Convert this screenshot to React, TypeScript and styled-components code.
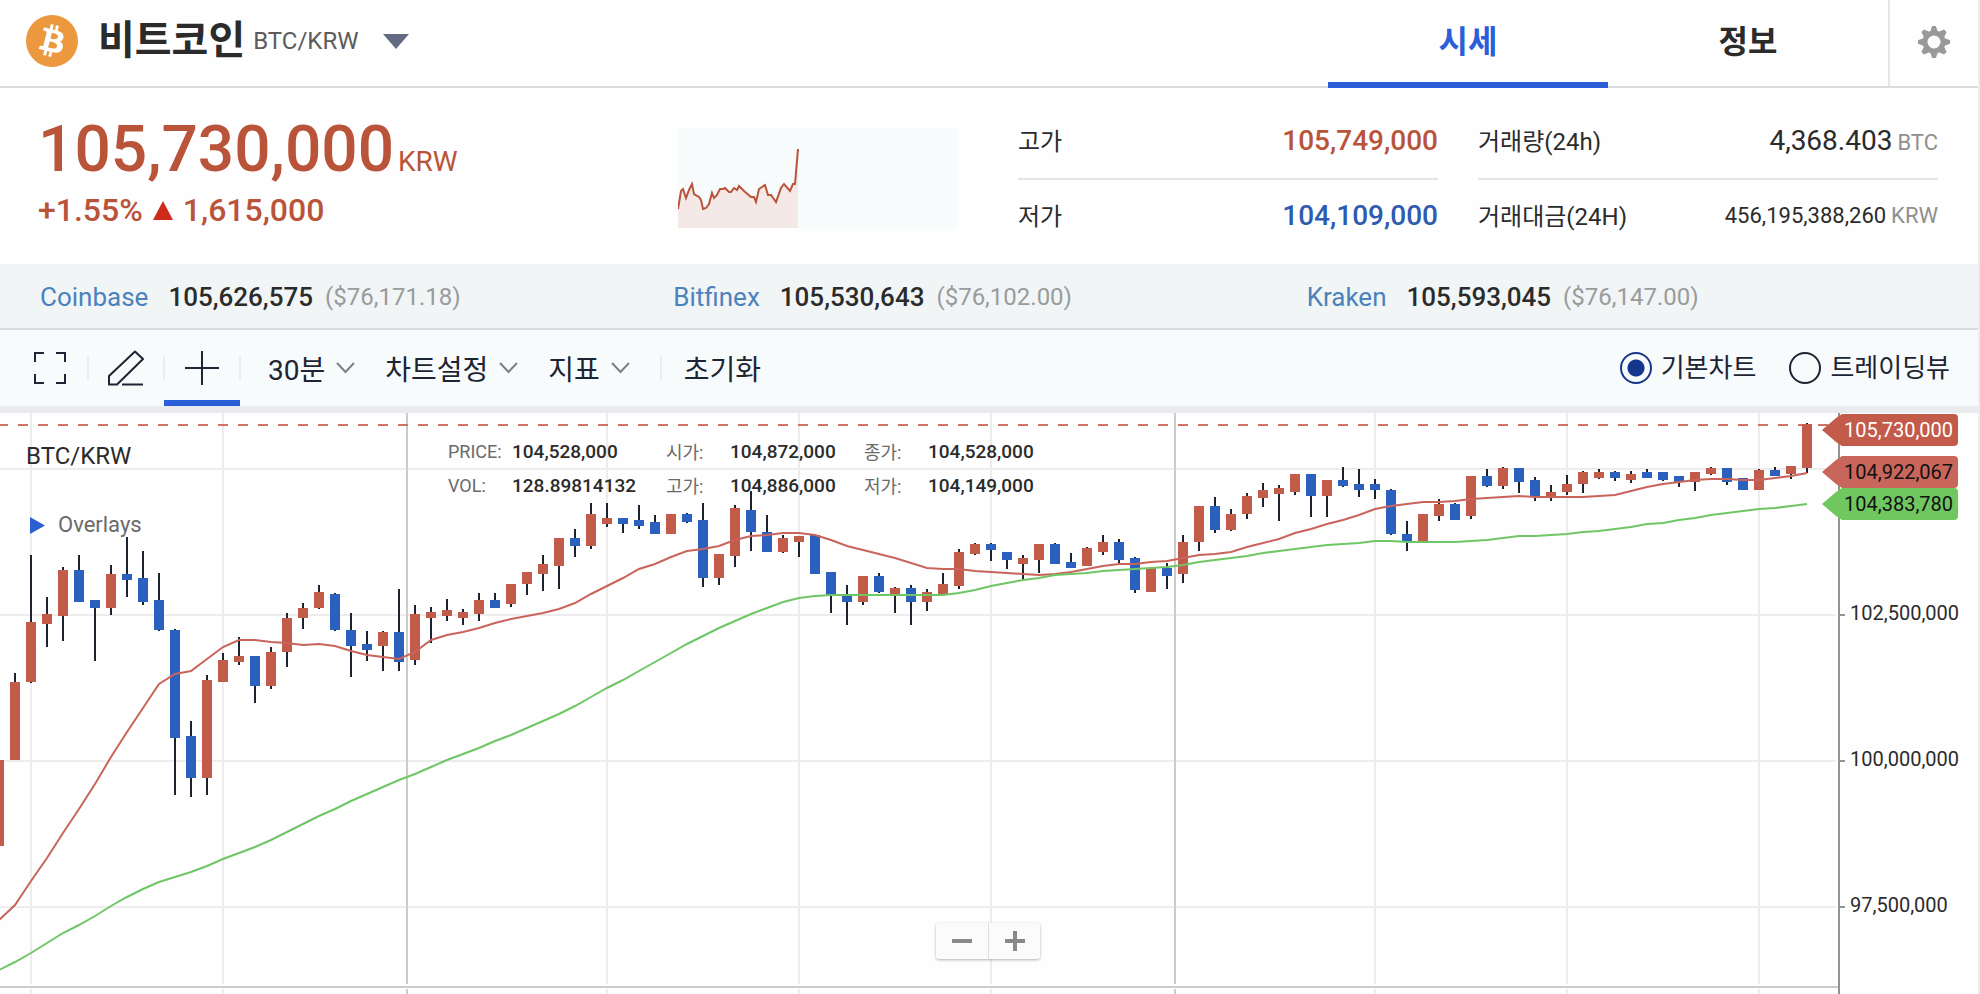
import React, { useState } from "react";
import styled, { createGlobalStyle } from "styled-components";
import { SiBitcoin } from "react-icons/si";

type Side = "up" | "down";
type Candle = [side: Side, bodyTop: number, bodyBottom: number, high: number, low: number];

const color = {
  text: "#2b2b2b",
  muted: "#8f8f8f",
  rise: "#b9543a",
  fall: "#2d5bb0",
  active: "#2a5fd8",
  candleUp: "#c35b4b",
  candleDown: "#2b60bf",
  wick: "#1b242e",
  maShort: "#c9645b",
  maLong: "#6fc665",
  grid: "#ececec",
  day: "#cbcbcb",
  rule: "#dadddd",
};

/* ---------- chart data ---------- */

const CHART_TOP = 413;
const FIRST_X = -1;
const STEP = 16;

const candles: Candle[] = [
  ["up", 760, 846, 760, 846],
  ["up", 682, 760, 673, 760],
  ["up", 622, 682, 555, 683],
  ["up", 614, 624, 597, 647],
  ["up", 570, 616, 567, 641],
  ["down", 570, 602, 555, 602],
  ["down", 600, 608, 600, 661],
  ["up", 574, 608, 565, 615],
  ["down", 574, 580, 537, 597],
  ["down", 578, 602, 551, 605],
  ["down", 600, 630, 573, 631],
  ["down", 630, 738, 629, 795],
  ["down", 736, 778, 721, 797],
  ["up", 680, 778, 675, 795],
  ["up", 660, 682, 653, 682],
  ["up", 656, 662, 637, 665],
  ["down", 656, 686, 656, 703],
  ["up", 652, 686, 647, 689],
  ["up", 618, 652, 613, 667],
  ["up", 608, 618, 603, 629],
  ["up", 592, 608, 585, 609],
  ["down", 594, 630, 593, 631],
  ["down", 630, 646, 613, 677],
  ["down", 644, 650, 631, 661],
  ["up", 632, 646, 631, 671],
  ["down", 632, 662, 589, 671],
  ["up", 614, 660, 605, 665],
  ["up", 612, 618, 607, 643],
  ["up", 610, 616, 599, 621],
  ["up", 612, 618, 609, 625],
  ["up", 600, 614, 593, 621],
  ["down", 600, 608, 593, 608],
  ["up", 584, 604, 584, 607],
  ["up", 572, 584, 572, 595],
  ["up", 564, 574, 555, 591],
  ["up", 538, 566, 538, 589],
  ["down", 538, 546, 529, 557],
  ["up", 514, 546, 503, 549],
  ["up", 518, 524, 503, 527],
  ["down", 518, 524, 518, 533],
  ["down", 520, 526, 505, 529],
  ["down", 522, 534, 515, 534],
  ["up", 514, 534, 514, 534],
  ["down", 514, 522, 513, 523],
  ["down", 520, 578, 503, 587],
  ["up", 554, 578, 554, 585],
  ["up", 508, 556, 505, 567],
  ["down", 510, 532, 491, 551],
  ["down", 532, 552, 515, 552],
  ["up", 538, 552, 535, 553],
  ["up", 536, 542, 536, 557],
  ["down", 535, 574, 535, 574],
  ["down", 572, 595, 572, 613],
  ["down", 595, 602, 585, 625],
  ["up", 576, 602, 576, 605],
  ["down", 576, 592, 573, 593],
  ["up", 588, 594, 587, 613],
  ["down", 588, 602, 585, 625],
  ["up", 592, 602, 589, 611],
  ["up", 584, 594, 573, 594],
  ["up", 552, 586, 549, 589],
  ["up", 544, 554, 543, 555],
  ["down", 544, 550, 543, 561],
  ["down", 552, 560, 552, 569],
  ["up", 558, 564, 555, 579],
  ["up", 544, 560, 544, 573],
  ["down", 544, 564, 543, 564],
  ["down", 562, 568, 553, 568],
  ["up", 548, 566, 547, 566],
  ["up", 542, 552, 535, 555],
  ["down", 542, 560, 539, 563],
  ["down", 558, 590, 557, 593],
  ["up", 568, 592, 568, 592],
  ["down", 568, 576, 563, 589],
  ["up", 542, 574, 535, 583],
  ["up", 506, 542, 506, 551],
  ["down", 506, 530, 497, 533],
  ["up", 514, 530, 509, 531],
  ["up", 496, 514, 493, 519],
  ["up", 490, 498, 483, 507],
  ["up", 488, 494, 485, 521],
  ["up", 474, 492, 474, 495],
  ["down", 474, 496, 474, 517],
  ["up", 480, 496, 480, 517],
  ["down", 480, 486, 467, 487],
  ["down", 484, 490, 469, 497],
  ["down", 484, 490, 479, 499],
  ["down", 490, 534, 489, 535],
  ["down", 534, 542, 521, 551],
  ["up", 514, 542, 514, 542],
  ["up", 504, 516, 499, 521],
  ["down", 504, 520, 503, 520],
  ["up", 476, 516, 476, 519],
  ["down", 476, 486, 469, 487],
  ["up", 468, 486, 467, 489],
  ["down", 468, 482, 468, 493],
  ["down", 480, 497, 477, 501],
  ["up", 492, 498, 485, 501],
  ["up", 484, 492, 475, 495],
  ["up", 472, 484, 471, 493],
  ["up", 472, 478, 469, 479],
  ["down", 472, 478, 471, 481],
  ["up", 474, 480, 471, 483],
  ["down", 472, 478, 469, 478],
  ["down", 472, 480, 472, 481],
  ["down", 476, 482, 476, 487],
  ["up", 472, 482, 472, 491],
  ["up", 468, 474, 467, 475],
  ["down", 468, 482, 468, 485],
  ["down", 478, 490, 478, 490],
  ["up", 470, 490, 469, 490],
  ["down", 470, 476, 467, 476],
  ["up", 466, 474, 466, 479],
  ["up", 424, 468, 423, 473],
];

const maShort = [
  920, 905, 881, 858, 833, 809, 784, 757, 732, 708, 684, 674, 671, 659, 647, 640, 640, 642, 643, 645, 644,
  646, 651, 655, 657, 659, 652, 640, 635, 632, 628, 623, 619, 616, 613, 609, 603, 594, 586, 578, 569, 564,
  557, 551, 549, 546, 540, 536, 535, 533, 533, 535, 540, 546, 550, 554, 558, 563, 568, 569, 569, 571, 572,
  573, 574, 575, 574, 572, 569, 566, 564, 564, 562, 561, 558, 555, 554, 552, 547, 543, 539, 533, 529, 524,
  520, 515, 509, 506, 504, 502, 502, 501, 499, 498, 497, 496, 497, 497, 497, 497, 496, 495, 491, 487, 484,
  482, 480, 479, 479, 480, 480, 478, 476, 473,
];

const maLong = [
  970, 962, 953, 943, 933, 925, 916, 906, 897, 889, 882, 877, 872, 866, 859, 853, 847, 840, 832, 824, 816,
  809, 801, 794, 787, 780, 774, 767, 760, 754, 748, 741, 735, 728, 721, 714, 706, 697, 688, 680, 671, 662,
  653, 644, 636, 628, 621, 614, 608, 602, 598, 596, 595, 595, 595, 595, 595, 595, 595, 595, 593, 590, 586,
  583, 580, 578, 575, 574, 573, 571, 570, 569, 568, 567, 565, 562, 560, 558, 556, 553, 551, 549, 547, 545,
  544, 543, 541, 541, 542, 542, 542, 542, 541, 540, 538, 536, 536, 535, 534, 532, 531, 529, 527, 524, 523,
  520, 518, 515, 513, 511, 509, 508, 506, 504,
];

const timeLines = [
  { x: 31 },
  { x: 223 },
  { x: 407, day: true },
  { x: 607 },
  { x: 799 },
  { x: 991 },
  { x: 1175, day: true },
  { x: 1375 },
  { x: 1567 },
  { x: 1759 },
];

const priceLines = [469, 615, 761, 907];
const axisPrices = ["102,500,000", "100,000,000", "97,500,000"];

const toPoints = (values: number[]) => values.map((y, i) => `${FIRST_X + i * STEP},${y}`).join(" ");

const sparkPoints =
  "0,81 3,63 5,61 8,70 11,62 14,56 16,66 21,69 23,72 25,81 28,80 31,76 34,65 36,70 39,67 42,61 45,61 47,60 51,64 53,64 56,60 59,62 61,58 66,63 73,69 76,69 78,74 81,61 84,59 87,57 90,67 93,67 98,74 103,60 106,56 112,63 115,56 117,56 120,21";

const exchanges = [
  { name: "Coinbase", krw: "105,626,575", usd: "($76,171.18)" },
  { name: "Bitfinex", krw: "105,530,643", usd: "($76,102.00)" },
  { name: "Kraken", krw: "105,593,045", usd: "($76,147.00)" },
];

const readout = [
  ["PRICE:", "104,528,000"],
  ["시가:", "104,872,000"],
  ["종가:", "104,528,000"],
  ["VOL:", "128.89814132"],
  ["고가:", "104,886,000"],
  ["저가:", "104,149,000"],
];

/* ---------- styles ---------- */

const GlobalStyle = createGlobalStyle`
  * { box-sizing: border-box; }
  body {
    margin: 0;
    background: #fefefe;
    color: ${color.text};
    font-family: Roboto, "Noto Sans CJK KR", sans-serif;
  }
  button, input { font-family: inherit; color: inherit; }
  button { border: 0; background: none; padding: 0; cursor: pointer; }
  dl, dd, ul { margin: 0; padding: 0; list-style: none; }
  svg { display: block; flex: none; }
`;

const Page = styled.main`
  display: flex;
  flex-direction: column;
  min-height: 100vh;
  border-right: 2px solid #eceeee;
`;

const Header = styled.header`
  display: flex;
  height: 88px;
  border-bottom: 2px solid ${color.rule};
`;

const MarketPicker = styled.button`
  display: flex;
  align-items: center;
  margin-right: auto;
  padding: 0 26px 4px;
`;

const CoinName = styled.h1`
  margin: 0 8px 0 20px;
  font-size: 40px;
  line-height: 56px;
  font-weight: 700;
`;

const PairCode = styled.span`
  margin-right: 24px;
  font-size: 24px;
  line-height: 28px;
  color: #5c5c5c;
`;

const Tabs = styled.nav`
  display: flex;
`;

const Tab = styled.a<{ $active?: boolean }>`
  display: flex;
  align-items: center;
  justify-content: center;
  width: 280px;
  height: 88px;
  padding-bottom: 4px;
  border-bottom: 6px solid ${(p) => (p.$active ? color.active : "transparent")};
  color: ${(p) => (p.$active ? color.active : color.text)};
  font-size: 32px;
  font-weight: 700;
  text-decoration: none;
`;

const SettingsButton = styled.button`
  display: flex;
  align-items: center;
  justify-content: center;
  width: 90px;
  padding-bottom: 2px;
  border-left: 2px solid #e4e5e5;
`;

const Summary = styled.section`
  display: flex;
  align-items: flex-start;
  height: 176px;
  padding: 16px 40px 0 38px;
  color: ${color.text};
`;

const PriceBlock = styled.div`
  flex: 1;
  padding-top: 6px;
  color: ${color.rise};
`;

const CurrentPrice = styled.div`
  display: flex;
  align-items: baseline;
  gap: 4px;
  font-size: 64px;
  line-height: 80px;
  font-weight: 500;
`;

const PriceUnit = styled.span`
  font-size: 28px;
  line-height: 32px;
  font-weight: 400;
`;

const Change = styled.div`
  display: flex;
  align-items: center;
  font-size: 32px;
  line-height: 40px;
  font-weight: 500;
  gap: 10px;
`;

const Sparkline = styled.svg`
  width: 280px;
  height: 100px;
  margin: 24px 60px 0 0;
  background: #f8fbfc;
`;

const Stats = styled.dl<{ $width: number }>`
  width: ${(p) => p.$width}px;

  & + & {
    margin-left: 40px;
  }
`;

const Stat = styled.div`
  display: flex;
  align-items: center;
  justify-content: space-between;
  height: 74px;
  font-size: 24px;

  & + & {
    border-top: 2px solid #e3e5e5;
  }

  dt {
    padding-bottom: 4px;
  }
`;

const StatValue = styled.dd<{ $tone?: string; $size?: number }>`
  padding-bottom: 1px;
  font-size: ${(p) => p.$size ?? 28}px;
  font-weight: ${(p) => (p.$tone ? 500 : 400)};
  color: ${(p) => p.$tone ?? color.text};
`;

const Unit = styled.span`
  margin-left: 5px;
  font-size: 22px;
  color: ${color.muted};
`;

const Exchanges = styled.ul`
  display: grid;
  grid-template-columns: repeat(3, 1fr);
  height: 66px;
  padding: 2px 38px 0 40px;
  background: #f1f5f6;
  border-bottom: 2px solid ${color.rule};
`;

const Exchange = styled.li`
  display: flex;
  align-items: center;
  font-size: 26px;
  white-space: nowrap;

  a {
    color: #4b82bd;
    text-decoration: none;
  }
  strong {
    margin: 0 12px 0 20px;
    font-weight: 500;
  }
  span {
    font-size: 24px;
    color: #999b9c;
  }
`;

const Toolbar = styled.div`
  display: flex;
  height: 83px;
  padding: 0 28px 0 12px;
  background: #f8fbfc;
  border-bottom: 7px solid #e9ebee;
  color: #1d2433;
`;

const ToolButton = styled.button<{ $active?: boolean }>`
  display: flex;
  align-items: center;
  justify-content: center;
  width: 76px;
  padding-top: 6px;
  border-bottom: 6px solid ${(p) => (p.$active ? color.active : "transparent")};
`;

const Divider = styled.span`
  align-self: center;
  width: 2px;
  height: 24px;
  margin: 0 -1px;
  background: #e9edef;
`;

const Menus = styled.div`
  display: flex;
  align-items: center;
  gap: 30px;
  padding: 0 31px 0 28px;
`;

const MenuButton = styled.button`
  display: flex;
  align-items: center;
  gap: 11px;
  padding-top: 6px;
  font-size: 28px;
  line-height: 40px;

  svg {
    margin-bottom: 6px;
  }
`;

const ResetButton = styled(MenuButton)`
  margin-left: 23px;
`;

const ChartModes = styled.fieldset`
  display: flex;
  align-items: center;
  gap: 33px;
  margin: 0 0 0 auto;
  padding: 0;
  border: 0;
`;

const Mode = styled.label`
  display: flex;
  align-items: center;
  gap: 9px;
  font-size: 26px;
  line-height: 32px;
  cursor: pointer;
`;

const Radio = styled.input`
  appearance: none;
  width: 32px;
  height: 32px;
  margin: 0;
  border: 2px solid #1d2433;
  border-radius: 50%;

  &:checked {
    border-color: #16358c;
    background: radial-gradient(circle, #16358c 8px, transparent 9px);
  }
`;

const Chart = styled.section`
  position: relative;
  display: flex;
  flex: 1;
  min-height: 581px;
`;

const PlotArea = styled.div`
  flex: 1;
  min-width: 0;
  overflow: hidden;
`;

const Plot = styled.svg`
  width: 100%;
  height: 581px;
`;

const Axis = styled.ol`
  width: 140px;
  margin: 0;
  padding: 129px 0 0;
  list-style: none;
  border-left: 2px solid #939393;
`;

const AxisPrice = styled.li`
  display: flex;
  align-items: center;
  gap: 5px;
  height: 146px;
  font-size: 20px;

  &::before {
    content: "";
    width: 5px;
    height: 2px;
    background: #939393;
  }

  span {
    padding-bottom: 4px;
  }
`;

const Tags = styled.ul`
  position: absolute;
  top: 1px;
  right: 20px;
  display: flex;
  flex-direction: column;
`;

const Tag = styled.li<{ $fill: string; $ink: string; $after?: number }>`
  width: 136px;
  height: 32px;
  padding: 0 6px 0 22px;
  margin-bottom: ${(p) => p.$after ?? 0}px;
  border-radius: 0 4px 4px 0;
  background: ${(p) => p.$fill};
  clip-path: polygon(0 50%, 14px 4px, 20px 0, 100% 0, 100% 100%, 20px 100%, 14px 28px);
  color: ${(p) => p.$ink};
  font-size: 20px;
  line-height: 32px;
`;

const Legend = styled.div`
  position: absolute;
  top: 27px;
  left: 26px;
`;

const LegendPair = styled.div`
  font-size: 24px;
  line-height: 32px;
`;

const OverlaysButton = styled.button`
  display: flex;
  align-items: center;
  gap: 13px;
  margin-top: 39px;
  padding-left: 4px;
  font-size: 22px;
  line-height: 28px;
  color: #6a6a6a;
`;

const Readout = styled.dl`
  position: absolute;
  top: 21px;
  left: 448px;
  display: grid;
  grid-template-columns: 218px 198px auto;
`;

const ReadoutItem = styled.div`
  display: grid;
  grid-template-columns: 64px auto;
  align-items: center;
  height: 34px;
  font-size: 18px;
  color: #6a6a6a;

  dd {
    font-size: 19px;
    font-weight: 500;
    color: ${color.text};
  }
`;

const Zoom = styled.div`
  position: absolute;
  top: 510px;
  left: calc(50% - 53px);
  display: flex;
  border-radius: 3px;
  background: #fbfbfb;
  box-shadow: 0 1px 3px rgba(0, 0, 0, 0.3);
`;

const ZoomButton = styled.button`
  display: flex;
  align-items: center;
  justify-content: center;
  width: 52px;
  height: 36px;

  & + & {
    border-left: 1px solid #dedede;
  }
`;

/* ---------- icons ---------- */

const GearIcon = () => (
  <svg width="32" height="32" viewBox="-16 -16 32 32" fill="#999">
    <circle r="9" fill="none" stroke="#999" strokeWidth="5" />
    {[0, 45, 90, 135, 180, 225, 270, 315].map((angle) => (
      <path key={angle} d="M-4-10 L-1.8-16 H1.8 L4-10Z" transform={`rotate(${angle})`} />
    ))}
  </svg>
);

const ExpandIcon = () => (
  <svg width="32" height="32" viewBox="0 0 32 32" fill="none" stroke="currentColor" strokeWidth="2">
    <path d="M1 10V1H10M22 1H31V10M31 22V31H22M10 31H1V22" />
  </svg>
);

const PencilIcon = () => (
  <svg width="36" height="36" viewBox="0 0 36 36" fill="none" stroke="currentColor" strokeWidth="2">
    <path d="M1 26 27 1.500 35 9 9 34.500H1Z M14 34.500H35" strokeLinejoin="round" />
  </svg>
);

const CrosshairIcon = () => (
  <svg width="34" height="34" viewBox="0 0 34 34" stroke="currentColor" strokeWidth="2">
    <path d="M17 0V34M0 17H34" />
  </svg>
);

const ChevronIcon = () => (
  <svg width="19" height="12" viewBox="0 0 19 12" fill="none" stroke="#7b808a" strokeWidth="2">
    <path d="M1 1 9.500 10 18 1" />
  </svg>
);

const PriceSparkline = () => (
  <Sparkline viewBox="0 0 280 100" aria-label="24시간 시세">
    <polygon points={`0,100 ${sparkPoints} 120,100`} fill="#f4e9e7" />
    <polyline points={sparkPoints} fill="none" stroke="#b9543a" strokeWidth="2" />
  </Sparkline>
);

const CandlePlot = () => (
  <Plot viewBox={`0 ${CHART_TOP} 1838 581`} preserveAspectRatio="xMaxYMin slice" aria-label="BTC/KRW">
    {priceLines.map((y) => (
      <rect key={y} x="0" y={y - 1} width="1836" height="2" fill={color.grid} />
    ))}
    {timeLines.map(({ x, day }) => (
      <g key={x} fill={day ? color.day : color.grid}>
        <rect x={x - 1} y={CHART_TOP} width="2" height="571" />
        <rect x={x - 1} y="989" width="2" height="5" />
      </g>
    ))}
    <rect x="0" y="986" width="1838" height="2" fill={color.day} />
    <line x1="0" x2="1838" y1="425" y2="425" stroke="#cf7462" strokeWidth="2" strokeDasharray="10 10" strokeDashoffset="2" />
    {candles.map(([side, top, bottom, high, low], i) => {
      const x = FIRST_X + i * STEP;
      return (
        <g key={x}>
          <rect x={x - 1} y={high} width="2" height={low - high} fill={color.wick} />
          <rect
            x={x - 5}
            y={top}
            width="10"
            height={bottom - top}
            fill={side === "up" ? color.candleUp : color.candleDown}
          />
        </g>
      );
    })}
    <polyline points={toPoints(maShort)} fill="none" stroke={color.maShort} strokeWidth="2" />
    <polyline points={toPoints(maLong)} fill="none" stroke={color.maLong} strokeWidth="2" />
  </Plot>
);

/* ---------- page ---------- */

export default function App() {
  const [mode, setMode] = useState("basic");

  return (
    <>
      <GlobalStyle />
      <Page>
        <Header>
          <MarketPicker type="button">
            <SiBitcoin size={52} color="#eb983f" />
            <CoinName>비트코인</CoinName>
            <PairCode>BTC/KRW</PairCode>
            <svg width="26" height="15" viewBox="0 0 26 15" fill="#636b83">
              <path d="M0 0H26L13 15Z" />
            </svg>
          </MarketPicker>
          <Tabs>
            <Tab href="#price" $active>시세</Tab>
            <Tab href="#info">정보</Tab>
          </Tabs>
          <SettingsButton type="button" aria-label="설정">
            <GearIcon />
          </SettingsButton>
        </Header>

        <Summary>
          <PriceBlock>
            <CurrentPrice>
              105,730,000<PriceUnit>KRW</PriceUnit>
            </CurrentPrice>
            <Change>
              <span>+1.55%</span>
              <svg width="20" height="19" viewBox="0 0 20 19" fill="#cf2b1c">
                <path d="M10 0 20 19H0Z" />
              </svg>
              <span>1,615,000</span>
            </Change>
          </PriceBlock>
          <PriceSparkline />
          <Stats $width={420}>
            <Stat>
              <dt>고가</dt>
              <StatValue $tone={color.rise}>105,749,000</StatValue>
            </Stat>
            <Stat>
              <dt>저가</dt>
              <StatValue $tone={color.fall}>104,109,000</StatValue>
            </Stat>
          </Stats>
          <Stats $width={460}>
            <Stat>
              <dt>거래량(24h)</dt>
              <StatValue>4,368.403<Unit>BTC</Unit></StatValue>
            </Stat>
            <Stat>
              <dt>거래대금(24H)</dt>
              <StatValue $size={22}>456,195,388,260<Unit>KRW</Unit></StatValue>
            </Stat>
          </Stats>
        </Summary>

        <Exchanges>
          {exchanges.map(({ name, krw, usd }) => (
            <Exchange key={name}>
              <a href={`#${name.toLowerCase()}`}>{name}</a>
              <strong>{krw}</strong>
              <span>{usd}</span>
            </Exchange>
          ))}
        </Exchanges>

        <Toolbar>
          <ToolButton type="button" aria-label="전체화면"><ExpandIcon /></ToolButton>
          <Divider />
          <ToolButton type="button" aria-label="그리기"><PencilIcon /></ToolButton>
          <Divider />
          <ToolButton type="button" aria-label="십자선" $active><CrosshairIcon /></ToolButton>
          <Divider />
          <Menus>
            <MenuButton type="button">30분<ChevronIcon /></MenuButton>
            <MenuButton type="button">차트설정<ChevronIcon /></MenuButton>
            <MenuButton type="button">지표<ChevronIcon /></MenuButton>
          </Menus>
          <Divider />
          <ResetButton type="button">초기화</ResetButton>
          <ChartModes>
            <Mode>
              <Radio type="radio" name="mode" checked={mode === "basic"} onChange={() => setMode("basic")} />
              기본차트
            </Mode>
            <Mode>
              <Radio type="radio" name="mode" checked={mode === "view"} onChange={() => setMode("view")} />
              트레이딩뷰
            </Mode>
          </ChartModes>
        </Toolbar>

        <Chart>
          <PlotArea>
            <CandlePlot />
          </PlotArea>
          <Axis>
            {axisPrices.map((price) => (
              <AxisPrice key={price}><span>{price}</span></AxisPrice>
            ))}
          </Axis>
          <Tags>
            <Tag $fill="#c35b4b" $ink="#fff" $after={10}>105,730,000</Tag>
            <Tag $fill="#c9665b" $ink="#111">104,922,067</Tag>
            <Tag $fill="#70c65f" $ink="#111">104,383,780</Tag>
          </Tags>
          <Legend>
            <LegendPair>BTC/KRW</LegendPair>
            <OverlaysButton type="button">
              <svg width="15" height="17" viewBox="0 0 15 17" fill="#2b5fd0">
                <path d="M0 0 15 8.500 0 17Z" />
              </svg>
              Overlays
            </OverlaysButton>
          </Legend>
          <Readout>
            {readout.map(([label, value]) => (
              <ReadoutItem key={label}>
                <dt>{label}</dt>
                <dd>{value}</dd>
              </ReadoutItem>
            ))}
          </Readout>
          <Zoom>
            <ZoomButton type="button" aria-label="축소">
              <svg width="20" height="20" viewBox="0 0 20 20" fill="#898989">
                <path d="M0 8H20V12H0Z" />
              </svg>
            </ZoomButton>
            <ZoomButton type="button" aria-label="확대">
              <svg width="20" height="20" viewBox="0 0 20 20" fill="#898989">
                <path d="M0 8H8V0H12V8H20V12H12V20H8V12H0Z" />
              </svg>
            </ZoomButton>
          </Zoom>
        </Chart>
      </Page>
    </>
  );
}
